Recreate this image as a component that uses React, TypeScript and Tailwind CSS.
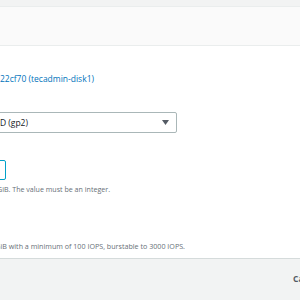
import React from "react";

const font = { fontFamily: '"Open Sans", "Liberation Sans", sans-serif' };

// Text that is cut off by the left edge: anchored by its right end at x = width.
function RightAnchored({ width, className, children }: { width: number; className: string; children: React.ReactNode }) {
  return (
    <div className="flex justify-end" style={{ width }}>
      <span className={`whitespace-nowrap shrink-0 ${className}`}>{children}</span>
    </div>
  );
}

export default function App() {
  return (
    <div className="w-[300px] h-[300px] overflow-hidden bg-white flex flex-col" style={font}>
      {/* top strip */}
      <div className="h-[7px] bg-[#f2f3f3] border-b border-[#eaeded]" />
      {/* panel header */}
      <div className="h-[39px] bg-[#fafafa] border-b border-[#eaeded]" />

      {/* form body */}
      <div className="flex-1 flex flex-col">
        <div className="mt-[27px]">
          <RightAnchored width={94} className="text-[8.5px] leading-[12px] text-[#0073bb]">
            vol-0f3a5b9e4d22cf70 (tecadmin-disk1)
          </RightAnchored>
        </div>

        <div className="mt-[27px] ml-[-62px] w-[239px] h-[21px] border border-[#aab7b8] rounded-[2px] flex items-center justify-between pr-[7px] text-[#16191f]">
          <div className="pl-[61px]">
            <RightAnchored width={28} className="text-[8.5px] leading-[12px]">
              General Purpose SSD (gp2)
            </RightAnchored>
          </div>
          <svg width="7" height="5" viewBox="0 0 7 5">
            <path d="M0 0h7L3.5 5z" fill="#545b64" />
          </svg>
        </div>

        <div className="mt-[27px] ml-[-62px] w-[68px] h-[20px] border border-[#00a1c9] rounded-[2px]" />
        <div className="mt-[4px]">
          <RightAnchored width={110} className="text-[7.1px] leading-[10px] text-[#687078]">
            Min: 1 GiB, Max: 16384 GiB. The value must be an integer.
          </RightAnchored>
        </div>

        <div className="mt-[47px]">
          <RightAnchored width={185} className="text-[7.15px] leading-[10px] text-[#687078]">
            Baseline of 3 IOPS per GiB with a minimum of 100 IOPS, burstable to 3000 IOPS.
          </RightAnchored>
        </div>
      </div>

      {/* footer */}
      <div className="h-[42px] bg-[#f2f3f3] border-t border-[#d5dbdb] flex items-center">
        <span className="ml-[293px] text-[8.5px] font-bold text-[#545b64] whitespace-nowrap">Cancel</span>
      </div>
    </div>
  );
}
